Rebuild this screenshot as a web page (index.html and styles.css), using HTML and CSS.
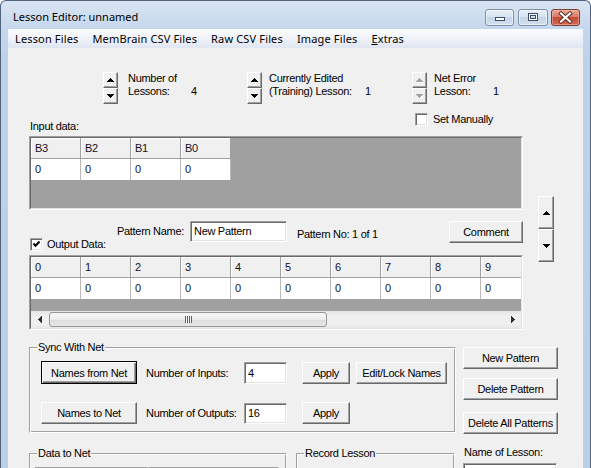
FILE: index.html
```html
<!DOCTYPE html>
<html lang="en">
<head>
<meta charset="utf-8">
<title>Lesson Editor</title>
<link rel="stylesheet" href="styles.css">
</head>
<body>
<div class="window">
  <div class="titlebar">
    <div class="title">Lesson Editor: unnamed</div>
    <div class="capbtns">
      <div class="cap cmin"><svg width="27" height="15" viewBox="0 0 27 15"><rect x="9.5" y="7.5" width="9" height="3" fill="#fff" stroke="#3b4d66"/></svg></div>
      <div class="cap cmax"><svg width="28" height="15" viewBox="0 0 28 15"><rect x="9.5" y="3.5" width="9" height="7" fill="none" stroke="#3b4d66"/><rect x="10.5" y="4.5" width="7" height="5" fill="none" stroke="#fff"/><rect x="11.5" y="5.5" width="5" height="3" fill="none" stroke="#3b4d66"/></svg></div>
      <div class="cap cclose"><svg width="27" height="15" viewBox="0 0 27 15"><path d="M9 3.5L18 11.5M18 3.5L9 11.5" stroke="#5a2a22" stroke-width="4" stroke-linecap="square"/><path d="M9 3.5L18 11.5M18 3.5L9 11.5" stroke="#fff" stroke-width="2.2" stroke-linecap="square"/></svg></div>
    </div>
  </div>
  <div class="client">
    <div class="menubar">
      <span class="mi">Lesson Files</span>
      <span class="mi">MemBrain CSV Files</span>
      <span class="mi">Raw CSV Files</span>
      <span class="mi">Image Files</span>
      <span class="mi"><u>E</u>xtras</span>
    </div>
    <div class="dlg">
      <div class="spinrow">
        <div class="sg">
          <div class="updown">
            <div class="ud raised"><svg class="tri" width="7" height="4" viewBox="0 0 7 4"><path d="M3 0h1v1h1v1h1v1h1v1H0V3h1V2h1V1h1z"/></svg></div>
            <div class="ud raised"><svg class="tri" width="7" height="4" viewBox="0 0 7 4"><path d="M0 0h7v1H6v1H5v1H4v1H3V3H2V2H1V1H0z"/></svg></div>
          </div>
          <div class="st st1"><div>Number of</div><div><span class="lb">Lessons:</span>4</div></div>
        </div>
        <div class="sg">
          <div class="updown">
            <div class="ud raised"><svg class="tri" width="7" height="4" viewBox="0 0 7 4"><path d="M3 0h1v1h1v1h1v1h1v1H0V3h1V2h1V1h1z"/></svg></div>
            <div class="ud raised"><svg class="tri" width="7" height="4" viewBox="0 0 7 4"><path d="M0 0h7v1H6v1H5v1H4v1H3V3H2V2H1V1H0z"/></svg></div>
          </div>
          <div class="st st2"><div>Currently Edited</div><div><span class="lb">(Training) Lesson:</span>1</div></div>
        </div>
        <div class="sg">
          <div class="updown">
            <div class="ud raised dis"><svg class="tri" width="7" height="4" viewBox="0 0 7 4"><path d="M3 0h1v1h1v1h1v1h1v1H0V3h1V2h1V1h1z"/></svg></div>
            <div class="ud raised dis"><svg class="tri" width="7" height="4" viewBox="0 0 7 4"><path d="M0 0h7v1H6v1H5v1H4v1H3V3H2V2H1V1H0z"/></svg></div>
          </div>
          <div class="st st3"><div>Net Error</div><div><span class="lb">Lesson:</span>1</div></div>
        </div>
      </div>

      <div class="mid">
        <div class="midleft">
          <div class="labelrow">
            <div class="inlabel">Input data:</div>
            <div class="check setman"><span class="cb"></span><span>Set Manually</span></div>
          </div>
          <div class="grid ingrid"><div class="gin">
            <div class="grow"><div class="hc">B3</div><div class="hc">B2</div><div class="hc">B1</div><div class="hc">B0</div></div>
            <div class="grow"><div class="dc">0</div><div class="dc">0</div><div class="dc">0</div><div class="dc">0</div></div>
          </div></div>

          <div class="patrow">
            <div class="check ocheck"><span class="cb"><svg width="9" height="9" viewBox="0 0 9 9"><path d="M1.5 3.5L3.5 5.8L7.5 1.5" fill="none" stroke="#000" stroke-width="2"/></svg></span><span>Output Data:</span></div>
            <div class="pname">Pattern Name:</div>
            <div class="tbox sunk">New Pattern</div>
            <div class="pno">Pattern No: 1 of 1</div>
            <div class="btn raised bcomment">Comment</div>
          </div>

          <div class="grid outgrid"><div class="gin">
            <div class="grow"><div class="hc">0</div><div class="hc">1</div><div class="hc">2</div><div class="hc">3</div><div class="hc">4</div><div class="hc">5</div><div class="hc">6</div><div class="hc">7</div><div class="hc">8</div><div class="hc">9</div></div>
            <div class="grow"><div class="dc">0</div><div class="dc">0</div><div class="dc">0</div><div class="dc">0</div><div class="dc">0</div><div class="dc">0</div><div class="dc">0</div><div class="dc">0</div><div class="dc">0</div><div class="dc">0</div></div>
            <div class="gfill"></div>
            <div class="hscroll">
              <div class="sarrow"><svg width="4" height="7" viewBox="0 0 4 7"><path d="M3 0h1v7H3V6H2V5H1V4H0V3h1V2h1V1h1z"/></svg></div>
              <div class="strack"><div class="thumb"><span class="grip"></span></div></div>
              <div class="sarrow"><svg width="4" height="7" viewBox="0 0 4 7"><path d="M0 0h1v1h1v1h1v1h1v1H3v1H2v1H1v1H0z"/></svg></div>
            </div>
          </div></div>
        </div>
        <div class="bigspin">
          <div class="ud raised"><svg class="tri" width="7" height="4" viewBox="0 0 7 4"><path d="M3 0h1v1h1v1h1v1h1v1H0V3h1V2h1V1h1z"/></svg></div>
          <div class="ud raised"><svg class="tri" width="7" height="4" viewBox="0 0 7 4"><path d="M0 0h7v1H6v1H5v1H4v1H3V3H2V2H1V1H0z"/></svg></div>
        </div>
      </div>

      <div class="lower">
        <div class="group sync">
          <div class="gtitle">Sync With Net</div>
          <div class="srow srow1">
            <div class="btn bdef bnames">Names from Net</div>
            <div class="slabel">Number of Inputs:</div>
            <div class="tbox sunk tnum">4</div>
            <div class="btn raised bapply">Apply</div>
            <div class="btn raised bedit">Edit/Lock Names</div>
          </div>
          <div class="srow srow2">
            <div class="btn raised bnames">Names to Net</div>
            <div class="slabel">Number of Outputs:</div>
            <div class="tbox sunk tnum">16</div>
            <div class="btn raised bapply">Apply</div>
          </div>
        </div>
        <div class="rbtns">
          <div class="btn raised">New Pattern</div>
          <div class="btn raised rb2">Delete Pattern</div>
          <div class="btn raised rb3">Delete All Patterns</div>
        </div>
      </div>

      <div class="bottom">
        <div class="group gdata">
          <div class="gtitle">Data to Net</div>
          <div class="dboxes"><div class="sunk dbox1"></div><div class="sunk dbox2"></div></div>
        </div>
        <div class="group grec">
          <div class="gtitle">Record Lesson</div>
        </div>
        <div class="namecol">
          <div class="nlabel">Name of Lesson:</div>
          <div class="tbox sunk tname">Unnamed</div>
        </div>
      </div>
    </div>
  </div>
</div>
</body>
</html>
```

FILE: styles.css
```css
* { box-sizing: border-box; margin: 0; padding: 0; }
html, body { width: 591px; height: 468px; overflow: hidden; }
body {
  background: #fff;
  font-family: "Liberation Sans", Arial, sans-serif;
  font-size: 11px;
  letter-spacing: -0.3px;
  color: #000;
}

.window {
  width: 591px;
  height: 490px;
  border: 1px solid #52647c;
  border-bottom: none;
  border-radius: 6px 6px 0 0;
  background: linear-gradient(to bottom, #d9e5f3 0, #c5d7ed 28px, #bcd1ea 60px, #bad0e9 100%);
}

.titlebar { height: 28px; display: flex; padding: 8px 10px 0 12px; }
.title {
  flex: 1;
  font-family: "Noto Sans", sans-serif;
  font-size: 11px;
  letter-spacing: 0;
  line-height: 16px;
}
.capbtns { display: flex; }
.cap { width: 29px; height: 17px; border: 1px solid #7d8fa8; border-radius: 3px; }
.cap svg { display: block; }
.cmin, .cmax {
  background: linear-gradient(to bottom, #e9f0f8 0, #d8e3f0 45%, #c6d5e8 50%, #d2deed 100%);
  box-shadow: inset 0 0 0 1px rgba(255,255,255,0.55);
}
.cmax { width: 30px; margin-left: 4px; }
.cclose {
  margin-left: 3px;
  border-color: #7a3b31;
  background: linear-gradient(to bottom, #e9a898 0, #d97a66 45%, #c54a33 50%, #d26a52 100%);
  box-shadow: inset 0 0 0 1px rgba(255,200,190,0.45);
}

.client { margin: 0 7px; }
.menubar {
  height: 19px;
  display: flex;
  background: linear-gradient(to bottom, #fbfcfe 0, #eef1f8 55%, #dfe6f2 100%);
  font-family: "Noto Sans", sans-serif;
  font-size: 11px;
  letter-spacing: 0.15px;
  line-height: 19px;
}
.mi { padding: 0 7px; }
.mi u { text-decoration: underline; }

.dlg { background: #f0f0f0; height: 440px; padding: 24px 0 0 21px; }

/* 3D controls */
.raised {
  background: #f0f0f0;
  border: 1px solid;
  border-color: #fff #696969 #696969 #fff;
  box-shadow: inset -1px -1px #a0a0a0;
}
.sunk {
  background: #fff;
  border: 1px solid;
  border-color: #a0a0a0 #fff #fff #a0a0a0;
  box-shadow: inset 1px 1px #696969, inset -1px -1px #e3e3e3;
}
.btn { height: 22px; display: flex; align-items: center; justify-content: center; white-space: nowrap; }
.bdef {
  background: #f0f0f0;
  border: 1px solid #000;
  box-shadow: inset 1px 1px #fff, inset -1px -1px #696969, inset -2px -2px #a0a0a0;
}

/* spinners */
.spinrow { display: grid; grid-template-columns: 144px 165px 120px; margin-left: 74px; }
.sg { display: flex; }
.updown { width: 15px; display: flex; flex-direction: column; }
.ud { height: 16px; display: flex; align-items: center; justify-content: center; }
.tri { display: block; fill: #000; }
.dis .tri { fill: #a0a0a0; filter: drop-shadow(1px 1px 0 #fff); }
.st { line-height: 13px; white-space: nowrap; }
.st1 { margin-left: 10px; }
.st2 { margin-left: 7px; }
.st3 { margin-left: 7px; }
.lb { display: inline-block; }
.st1 .lb { width: 63px; }
.st2 .lb { width: 96px; }
.st3 .lb { width: 59px; }

/* middle */
.mid { display: flex; margin-top: 9px; }
.midleft { width: 494px; }
.labelrow { display: grid; grid-template-columns: 386px auto; height: 20px; }
.inlabel { align-self: end; line-height: 13px; padding-left: 1px; }
.check { display: flex; align-items: center; gap: 5px; line-height: 13px; align-self: start; white-space: nowrap; }
.cb { width: 13px; height: 13px; flex: 0 0 13px; display: flex; align-items: center; justify-content: center;
  background: #fff; border: 1px solid; border-color: #a0a0a0 #fff #fff #a0a0a0;
  box-shadow: inset 1px 1px #696969, inset -1px -1px #e3e3e3; }
.cb svg { display: block; }

.grid { width: 494px; border: 1px solid; border-color: #a0a0a0 #fff #fff #a0a0a0; margin-top: 3px; }
.gin { border: 1px solid; border-color: #696969 #e3e3e3 #e3e3e3 #696969; background: #a0a0a0; overflow: hidden; }
.ingrid .gin { height: 72px; }
.grow { display: flex; }
.hc, .dc { flex: 0 0 50px; padding-left: 4px; border-right: 1px solid #a0a0a0; color: #121228; }
.hc { height: 21px; line-height: 20px; background: #f0f0f0; border-bottom: 1px solid #a0a0a0; box-shadow: inset 1px 1px #fff; }
.dc { height: 22px; line-height: 21px; background: #fff; border-bottom: 1px solid #a0a0a0; border-right-color: #b8b8b8; }

.patrow { display: grid; grid-template-columns: 88px 73px 107px 152px 75px; margin-top: 11px; height: 30px; }
.ocheck { margin: 17px 0 0 1px; gap: 4px; }
.pname { margin-top: 4px; line-height: 13px; white-space: nowrap; }
.tbox { height: 21px; line-height: 19px; padding-left: 3px; white-space: nowrap; overflow: hidden; }
.patrow .tbox { width: 97px; }
.pno { margin-top: 7px; line-height: 13px; white-space: nowrap; }
.bcomment { width: 74px; }

.outgrid { margin-top: 4px; }
.outgrid .gin { height: 73px; }
.gfill { height: 11px; }
.hscroll { height: 17px; display: flex; background: linear-gradient(to bottom, #e4e4e4 0, #eeeeee 25%, #f1f1f1 75%, #e8e8e8 100%); }
.sarrow { width: 17px; flex: 0 0 17px; display: flex; align-items: center; justify-content: center; }
.sarrow svg { display: block; fill: #303030; }
.strack { flex: 1; padding: 1px 0 1px 1px; }
.thumb { width: 278px; height: 15px; border: 1px solid #979797; border-radius: 3px;
  background: linear-gradient(to bottom, #f7f7f7 0, #ededed 50%, #dedede 51%, #e6e6e6 100%);
  display: flex; align-items: center; justify-content: center; }
.grip { width: 7px; height: 7px; background: repeating-linear-gradient(to right, #5f5f5f 0 1px, #fafafa 1px 2px); }

.bigspin { margin: 83px 0 0 15px; width: 16px; display: flex; flex-direction: column; }
.bigspin .ud { height: 33px; }

/* lower */
.lower { display: flex; align-items: flex-start; margin-top: 17px; }
.group { border: 1px solid; border-color: #a0a0a0 #fff #fff #a0a0a0; box-shadow: inset 1px 1px #fff, inset -1px -1px #a0a0a0; }
.gtitle { width: max-content; margin: -7px 0 0 7px; padding: 0 1px; background: #f0f0f0; line-height: 13px; }
.sync { width: 427px; height: 86px; }
.srow { display: flex; align-items: center; margin-left: 11px; height: 22px; }
.srow1 { margin-top: 7px; height: 23px; }
.srow2 { margin-top: 18px; }
.bnames { width: 96px; }
.srow1 .bnames { height: 23px; }
.slabel { width: 98px; margin-left: 9px; white-space: nowrap; }
.tnum { width: 43px; }
.srow1 .tnum { height: 22px; line-height: 20px; }
.bapply { width: 48px; margin-left: 15px; }
.bedit { width: 91px; margin-left: 6px; }
.rbtns { margin-left: 7px; width: 95px; display: flex; flex-direction: column; }
.rb2 { margin-top: 9px; }
.rb3 { margin-top: 12px; }

/* bottom */
.bottom { display: flex; align-items: flex-start; margin-top: 12px; }
.gdata { width: 258px; height: 40px; margin-top: 7px; }
.grec { width: 159px; height: 40px; margin: 7px 0 0 9px; }
.dboxes { display: flex; margin: 7px 0 0 5px; }
.dbox1 { width: 114px; height: 20px; }
.dbox2 { width: 130px; height: 20px; }
.namecol { margin-left: 8px; width: 95px; }
.nlabel { line-height: 13px; padding-left: 1px; white-space: nowrap; }
.tname { margin-top: 4px; width: 94px; line-height: 17px; }
```
